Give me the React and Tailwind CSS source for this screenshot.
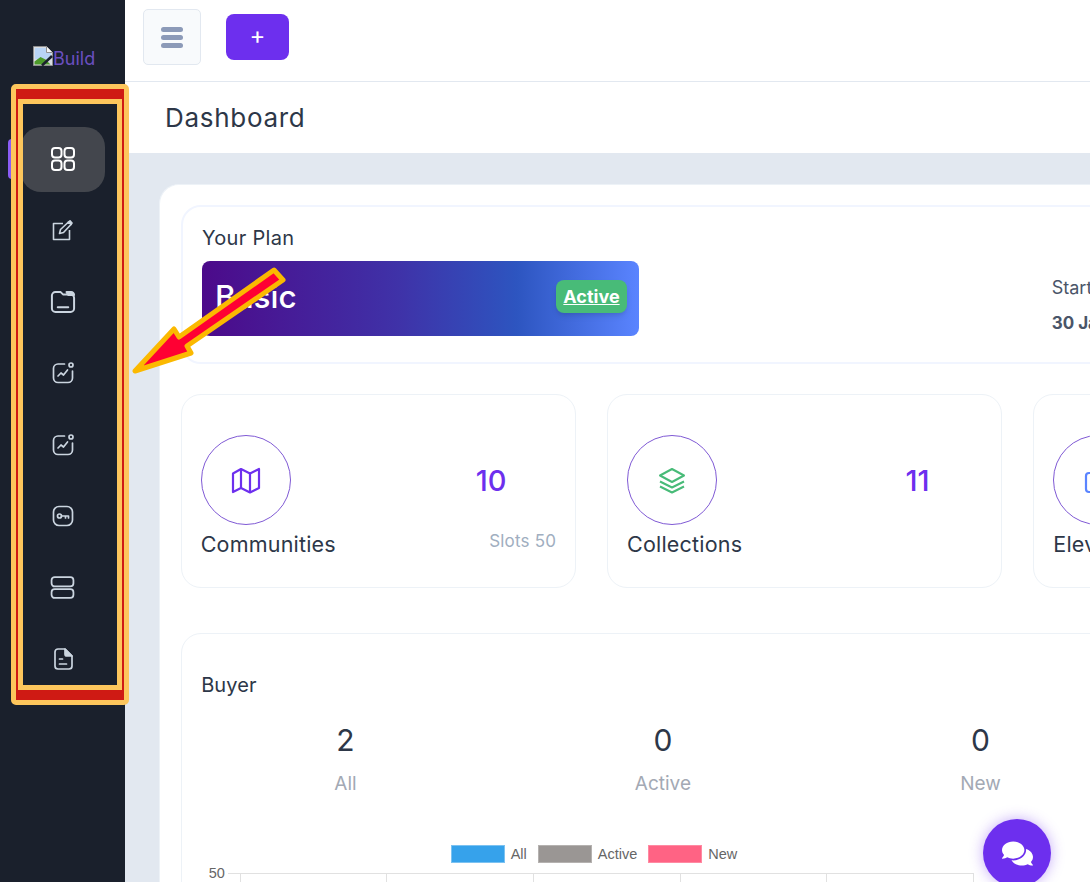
import React from 'react';
import { FaComments } from 'react-icons/fa';

const stroke = { fill: 'none', stroke: 'currentColor', strokeWidth: 1.7, strokeLinecap: 'round', strokeLinejoin: 'round' };

const GridIcon = () => (
  <svg width="24" height="24" viewBox="0 0 24 24" fill="none" stroke="#ffffff" strokeWidth="2">
    <rect x="1" y="1" width="9.500" height="9.500" rx="3" />
    <rect x="13.500" y="1" width="9.500" height="9.500" rx="3" />
    <rect x="1" y="13.500" width="9.500" height="9.500" rx="3" />
    <rect x="13.500" y="13.500" width="9.500" height="9.500" rx="3" />
  </svg>
);

const EditIcon = () => (
  <svg width="21" height="21" viewBox="0 0 21 21" fill="none" stroke="currentColor" strokeWidth="1.600" strokeLinejoin="round">
    <path d="M11 3.500H1.500V19.500H17.500V10" />
    <path d="M7.500 13.500L8.500 9.500L16.500 2L19 4.500L11.500 12.500Z" />
    <path d="M16.500 2L18 .8L20 3L19 4.500Z" fill="currentColor" />
  </svg>
);

const FolderIcon = () => (
  <svg width="28" height="28" viewBox="0 0 24 24" {...stroke}>
    <path d="M2.500 6.500a3 3 0 0 1 3-3h4.500l2 2h6.500a3 3 0 0 1 3 3v9a3 3 0 0 1-3 3h-13a3 3 0 0 1-3-3z" />
    <path d="M7.500 16.500h9" />
    <path d="M15 3.500h4a2.500 2.500 0 0 1 2.500 2.500l-5 0z" fill="currentColor" />
  </svg>
);

const ChartIcon = () => (
  <svg width="24" height="24" viewBox="0 0 24 24" {...stroke}>
    <path d="M13.500 3H7a4.500 4.500 0 0 0-4.500 4.500V17A4.500 4.500 0 0 0 7 21.500h10a4.500 4.500 0 0 0 4.500-4.500V10" />
    <circle cx="20" cy="4" r="2" />
    <path d="M7 15l3-3 2.500 2 4-5" />
  </svg>
);

const KeyIcon = () => (
  <svg width="24" height="24" viewBox="0 0 24 24" {...stroke}>
    <rect x="2.500" y="2.500" width="19" height="19" rx="5.500" />
    <circle cx="8.500" cy="12" r="2" />
    <path d="M10.500 12H17.500V14M14.500 12V14" />
  </svg>
);

const RowsIcon = () => (
  <svg width="25" height="25" viewBox="0 0 24 24" {...stroke}>
    <rect x="1.500" y="2" width="21" height="9" rx="3" />
    <rect x="1.500" y="13.500" width="21" height="8.500" rx="3" />
  </svg>
);

const FileIcon = () => (
  <svg width="24" height="24" viewBox="0 0 24 24" {...stroke}>
    <path d="M7 2h7l7 7v10a3 3 0 0 1-3 3H7a3 3 0 0 1-3-3V5a3 3 0 0 1 3-3z" />
    <path d="M14 2l7 7h-5a2 2 0 0 1-2-2z" fill="currentColor" />
    <path d="M8.500 12h3M8.500 17h7" />
  </svg>
);

const MapIcon = () => (
  <svg width="30" height="27" viewBox="0 0 30 27" fill="none" stroke="#6d2fee" strokeWidth="2.200" strokeLinejoin="round">
    <path d="M2 6.500L10 2l9 4.500L28 2v19l-9 4.500L10 21l-8 4z" />
    <path d="M10 2v19M19 6.500v19" />
  </svg>
);

const LayersIcon = () => (
  <svg width="28" height="27" viewBox="0 0 28 27" fill="none" stroke="#48bb78" strokeWidth="2" strokeLinejoin="round">
    <path d="M14 2l12 6.500-12 6.500L2 8.500z" />
    <path d="M2 14.500l12 6 12-6M2 19.500l12 6 12-6" />
  </svg>
);

const BagIcon = () => (
  <svg width="30" height="27" viewBox="0 0 30 27" fill="none" stroke="#5a84ff" strokeWidth="2.200" strokeLinejoin="round">
    <rect x="3" y="6" width="24" height="19" rx="3" />
    <path d="M10 6V3h10v3" />
  </svg>
);

const BrokenImage = () => (
  <svg width="20" height="20" viewBox="0 0 20 20" className="shrink-0">
    <path d="M0.500 0.500h13l6 6v13h-19z" fill="#d9dde3" stroke="#8f8f8f" />
    <path d="M2 2h11v5h5v6H2z" fill="#b9d4f5" />
    <path d="M1.500 18.500v-3l6-4.500 5 2.500 5 5z" fill="#4c9a2a" />
    <path d="M19 10L9 19.500" stroke="#1a202c" strokeWidth="2.500" />
    <path d="M13.500 0.500v6h6" fill="#f5f5f5" stroke="#8f8f8f" />
  </svg>
);

const navIcons = [
  <GridIcon key="grid" />,
  <EditIcon key="edit" />,
  <FolderIcon key="folder" />,
  <ChartIcon key="chart1" />,
  <ChartIcon key="chart2" />,
  <KeyIcon key="key" />,
  <RowsIcon key="rows" />,
  <FileIcon key="file" />,
];

const Sidebar = () => (
  <aside className="relative w-[125px] h-[882px] shrink-0 bg-[#1a202c] flex flex-col">
    <div className="h-[127px] pt-[46px] pl-[33px]">
      <div className="flex items-end text-[18px] leading-[20px] text-[#6b4fc0]">
        <BrokenImage />
        <span className="-mb-[3px]">Build</span>
      </div>
    </div>
    <nav className="flex flex-col gap-[6.400px] pl-[21px] w-[105px] text-[#cbd5e0]">
      {navIcons.map((icon, i) => (
        <div key={i} className={`h-[65px] w-[84px] pb-[1px] pr-[1px] flex items-center justify-center rounded-[20px] ${i === 0 ? 'bg-[#43464d]' : ''}`}>
          {icon}
        </div>
      ))}
    </nav>
    <div className="absolute left-[8px] top-[139px] w-[4px] h-[40px] bg-[#8b5cf6] rounded-l-[4px]" />
  </aside>
);

const StatCard = ({ icon, label, value, note }) => (
  <div className="w-[395.500px] h-[194px] shrink-0 border border-[#edf2f7] rounded-[20px] pt-[40px] px-[19px]">
    <div className="flex justify-between">
      <div className="w-[90px] h-[90px] rounded-full border border-[#805ad5] flex items-center justify-center">
        {icon}
      </div>
      <div className="w-[130px] pt-[27px] text-center text-[29px] leading-[38px] font-medium text-[#6d2fee]">{value}</div>
    </div>
    <div className="flex justify-between items-start mt-[5px]">
      <div className="text-[21.500px] tracking-[0.200px] leading-[28px] text-[#2d3748]">{label}</div>
      <div className="text-[17px] tracking-[0.200px] leading-[22px] text-[#a0aec0]">{note}</div>
    </div>
  </div>
);

const BuyerStat = ({ value, label }) => (
  <div className="w-[317.500px] text-center">
    <div className="text-[30px] leading-[36px] text-[#2d3748]">{value}</div>
    <div className="mt-[13px] text-[19px] leading-[26px] text-[#a3a9b4]">{label}</div>
  </div>
);

const LegendItem = ({ color, border, label }) => (
  <div className="flex items-center gap-[6px]">
    <span className={`w-[54px] h-[18px] border ${color} ${border}`} />
    <span>{label}</span>
  </div>
);

const Chart = () => (
  <div className="[font-family:'Liberation_Sans',sans-serif] text-[14.500px] text-[#666666]">
    <div className="flex gap-[11px] ml-[264px] leading-[18px]">
      <LegendItem color="bg-[#36a2eb]" border="border-[#7cc2f1]" label="All" />
      <LegendItem color="bg-[#9a9694]" border="border-[#b5b2b0]" label="Active" />
      <LegendItem color="bg-[#ff6384]" border="border-[#ff8aa2]" label="New" />
    </div>
    <div className="flex mt-[1px] ml-[22px]">
      <span className="w-[19px] leading-[18px]">50</span>
      <svg width="746" height="12" className="mt-[9px]">
        <path d="M0 .5H746" stroke="#e1e1e1" />
        <path d="M12.500 0V12M158.500 0V12M305.500 0V12M452.500 0V12M598.500 0V12M745.500 0V12" stroke="#e1e1e1" />
      </svg>
    </div>
  </div>
);

const Annotation = () => (
  <>
    <div className="absolute left-[11px] top-[84px] w-[118px] h-[621px] rounded-[5px] border-[5px] border-[#fdc65c]">
      <div className="w-full h-full border-x-[2px] border-y-[10px] border-[#cf1a14]">
        <div className="w-full h-full border-[5px] border-[#fdc65c]" />
      </div>
    </div>
    <svg className="absolute left-0 top-0" width="1090" height="882" fill="none">
      <path
        d="M135 371L174 329L179 337L274 270L283 280L187 346L191 353Z"
        fill="#ff0033"
        stroke="#fbb900"
        strokeWidth="5"
        strokeLinejoin="round"
      />
    </svg>
  </>
);

export default function App() {
  return (
    <div className="relative w-[1090px] h-[882px] overflow-hidden flex bg-[#e2e8f0] [font-family:Inter,sans-serif]">
      <Sidebar />
      <main className="flex-1 min-w-0 overflow-hidden">
        <header className="h-[82px] bg-white border-b border-[#e2e8f0] flex items-start pl-[18px]">
          <button className="mt-[9px] w-[58px] h-[56px] bg-[#f8fafc] border border-[#e2e8f0] rounded-[5px] flex flex-col items-center justify-center gap-[3px]">
            <span className="w-[22px] h-[5px] rounded-full bg-[#8c9ab8]" />
            <span className="w-[22px] h-[5px] rounded-full bg-[#8c9ab8]" />
            <span className="w-[22px] h-[5px] rounded-full bg-[#8c9ab8]" />
          </button>
          <button className="mt-[14px] ml-[25px] w-[63px] h-[46px] pb-[3px] bg-[#6d2fee] rounded-[8px] text-white text-[24px] leading-none">+</button>
        </header>
        <div className="h-[71px] bg-white pl-[40px] flex items-center text-[26px] tracking-[0.700px] text-[#2d3748]">Dashboard</div>
        <section className="mt-[31px] ml-[34px] w-[1200px] h-[800px] bg-white border-l border-t border-[#edf2f7] rounded-tl-[20px] pt-[20px] pl-[20.700px]">
          <div className="w-[1160px] h-[159px] border-2 border-[#f1f5ff] rounded-[20px] pt-[17px] pl-[19.300px] relative">
            <div className="text-[20px] tracking-[0.300px] leading-[28px] text-[#2d3748]">Your Plan</div>
            <div className="mt-[9px] w-[437px] h-[75px] rounded-[8px] bg-[linear-gradient(90deg,#4c0a8a_0%,#3f32a8_45%,#2d55c0_72%,#5a84ff_100%)] flex items-center justify-between pl-[13px] pr-[12px]">
              <span className="mb-[3px] text-[31.500px] font-medium text-white">Basic</span>
              <span className="mb-[4px] h-[33px] w-[71px] rounded-[8px] bg-[#48bb78] shadow-md flex items-center justify-center text-[18px] font-bold underline text-white">Active</span>
            </div>
            <div className="absolute left-[869px] top-[67px] text-[18px] text-[#4a5568]">Start</div>
            <div className="absolute left-[869px] top-[104px] text-[17px] font-bold text-[#4a5568]">30 Jan</div>
          </div>
          <div className="flex gap-[30.800px] mt-[30px]">
            <StatCard icon={<MapIcon />} label="Communities" value="10" note="Slots 50" />
            <StatCard icon={<LayersIcon />} label="Collections" value="11" note="" />
            <StatCard icon={<BagIcon />} label="Elevate" value="" note="" />
          </div>
          <div className="mt-[45px] w-[1160px] h-[400px] border border-[#edf2f7] rounded-[20px] pt-[37px] pl-[5px]">
            <div className="pl-[14.500px] text-[20px] tracking-[0.100px] leading-[28px] text-[#2d3748]">Buyer</div>
            <div className="flex mt-[23px]">
              <BuyerStat value="2" label="All" />
              <BuyerStat value="0" label="Active" />
              <BuyerStat value="0" label="New" />
            </div>
            <div className="mt-[48px]">
              <Chart />
            </div>
          </div>
        </section>
      </main>
      <button className="absolute left-[983px] top-[819px] w-[68px] h-[68px] rounded-full bg-[#6d2fee] shadow-[0_0_14px_rgba(109,47,238,0.4)] flex items-center justify-center text-white">
        <FaComments size={31} />
      </button>
      <Annotation />
    </div>
  );
}
